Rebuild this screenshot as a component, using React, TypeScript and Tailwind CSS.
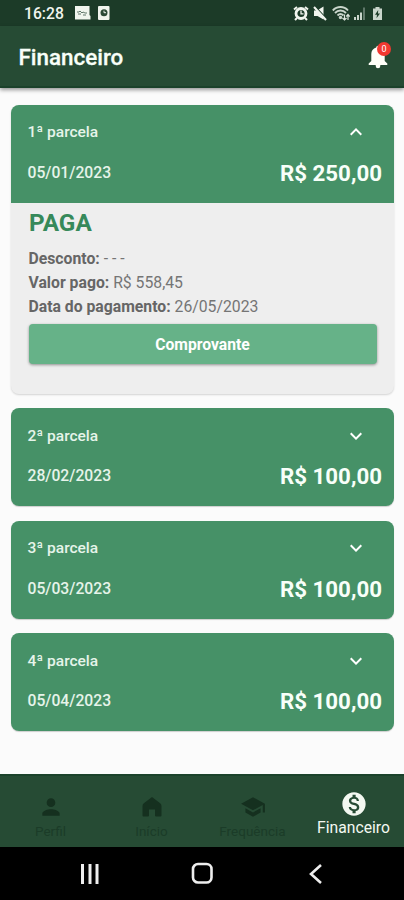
import React from "react";
import { MdPerson, MdSchool, MdMonetizationOn, MdExpandLess, MdExpandMore } from "react-icons/md";

type Parcela = { title: string; date: string; value: string };

const parcelas: Parcela[] = [
  { title: "2ª parcela", date: "28/02/2023", value: "R$ 100,00" },
  { title: "3ª parcela", date: "05/03/2023", value: "R$ 100,00" },
  { title: "4ª parcela", date: "05/04/2023", value: "R$ 100,00" },
];

function CardHeader({ item, open = false }: { item: Parcela; open?: boolean }) {
  const Chevron = open ? MdExpandLess : MdExpandMore;
  return (
    <div
      className={
        "flex h-[98px] flex-col bg-[#469167] pl-[17px] pr-[12px] text-[#e6f4ea] " +
        (open ? "rounded-t-[8px] pt-[15px]" : "rounded-[8px] pt-[15.5px] shadow-[0_1px_1px_rgba(0,0,0,0.18)]")
      }
    >
      <div className="flex h-6 items-center justify-between pr-[14px]">
        <span className="text-[15.5px] font-medium leading-6">{item.title}</span>
        <Chevron className="size-6 text-white" />
      </div>
      <div className="mt-[12.5px] flex h-8 items-center justify-between">
        <span className="text-[15.7px] font-medium leading-8">{item.date}</span>
        <span className="text-[22.3px] font-bold leading-8 text-[#f8fff9]">{item.value}</span>
      </div>
    </div>
  );
}

function StatusBar() {
  return (
    <div className="flex h-[26px] shrink-0 items-center bg-[#1c3b28] pl-6 pr-[21px] text-[#f1f5ee]">
      <span className="w-[50px] pt-[2px] text-[15.7px] font-medium leading-[26px]">16:28</span>
      <svg className="h-[14px] w-[17px]" viewBox="0 0 17 14">
        <path d="M1 0h14.500v9l1 1v3.500H1z" fill="currentColor" />
        <path d="M3 6h2l1-1 2 2 1-1 2 1h2M4 8h3m2 1h3" fill="none" stroke="#61776a" strokeWidth="1" />
      </svg>
      <svg className="ml-[7px] h-[14px] w-[12px]" viewBox="0 0 12 14">
        <rect width="11.5" height="14" rx="1" fill="currentColor" />
        <circle cx="6" cy="6.7" r="3.5" fill="#2b4935" />
        <path d="M6 4.7v2h2" fill="none" stroke="#edf3ed" />
      </svg>
      <div className="ml-auto flex items-center">
        <svg className="h-[15px] w-[16px]" viewBox="0 0 16 15">
          <circle cx="8" cy="7.5" r="5" fill="none" stroke="currentColor" strokeWidth="2.8" />
          <path d="M1 3.5 4 1m8 0 3 2.5M4 12l-2 2m10-2 2 2" stroke="currentColor" strokeWidth="2" />
          <path d="M8 4.5v3.3h2.5" fill="none" stroke="currentColor" strokeWidth="1.3" />
        </svg>
        <svg className="ml-[4px] h-[15px] w-[14px]" viewBox="0 0 14 15">
          <path d="M1 4.500h3L10.500.500v13L4.500 10H1z" fill="currentColor" />
          <path d="m1.800 0 12 13" stroke="#1c3b28" strokeWidth="1.300" />
          <path d="m1 1 12 13" stroke="currentColor" strokeWidth="2" />
        </svg>
        <svg className="ml-[5px] h-[15px] w-[18px]" viewBox="0 0 18 15">
          <path d="M.8 4.500C5-.1 12-.1 16 4.500M3 7c3-3.300 8-3.300 11 0M5.500 9.500q3-3 6 0" fill="none" stroke="#c9d5cb" strokeWidth="1.9" />
          <circle cx="8.500" cy="11.500" r="1.700" fill="#c9d5cb" />
          <path d="M12.500 8.500V14m-2-2 2 2 2-2M16 14V8.500m-1.700 2L16 8.500l1.700 2" fill="none" stroke="#dce5dc" strokeWidth="1.200" />
        </svg>
        <svg className="ml-[3px] h-[15px] w-[14px]" viewBox="0 0 14 15">
          <path d="M1 11h2v3H1zM4 9h2v5H4zM7 6.500h2V14H7z" fill="#c9d5cb" />
          <path d="M10 1.500h2V14h-2z" fill="#60786a" />
        </svg>
        <svg className="ml-[5px] h-[15px] w-[11px]" viewBox="0 0 11 15">
          <path d="M3.500 1h4v1.500H10V14H1V2.500h2.500z" fill="#c9d5cb" />
          <path d="M6.200 4 3 8.800h2l-.5 3.400L8 7.500H6z" fill="#1c3b28" />
        </svg>
      </div>
    </div>
  );
}

function BellIcon() {
  return (
    <svg className="absolute left-0 top-[3px] h-[24px] w-[20px]" viewBox="0 0 20 24" fill="#fffff8">
      <path d="M8.200 2.500a1.800 1.800 0 0 1 3.600 0C15 3.300 16.700 6 16.700 9v7l2.600 2.500V20H.7v-1.500L3.300 16V9c0-3 1.700-5.700 4.900-6.500zM7.700 20h4.600v1a2.300 2.300 0 0 1-4.600 0z" />
    </svg>
  );
}

function HomeIcon() {
  return (
    <svg className="size-6" viewBox="0 0 24 24" fill="currentColor">
      <path d="M12 2 3.800 8.200Q2.500 9.200 2.500 11v9.500q0 1 1 1H8q1 0 1-1V14.500h6v6q0 1 1 1h4.500q1 0 1-1V11q0-1.800-1.300-2.800z" />
    </svg>
  );
}

const tabs = [
  { label: "Perfil", icon: <MdPerson className="size-[26px]" /> },
  { label: "Início", icon: <HomeIcon /> },
  { label: "Frequência", icon: <MdSchool className="size-[26px]" /> },
];

export default function App() {
  return (
    <div className="flex h-[900px] w-[404px] flex-col overflow-hidden bg-[#fbfbfb] font-['Roboto',sans-serif]">
      <StatusBar />
      <header className="z-10 flex h-[62px] shrink-0 items-center justify-between border-b-2 border-[#1b422b] bg-[#264b34] pl-[18.5px] pr-[13px] text-white shadow-[0_2px_4px_rgba(0,0,0,0.4)]">
        <h1 className="pt-[2px] text-[22.4px] font-medium leading-8 text-[#f8fff8] [-webkit-text-stroke:0.3px_#f8fff8]">Financeiro</h1>
        <div className="relative h-7 w-[23px]">
          <BellIcon />
          <span className="absolute right-0 top-0 flex size-[14px] items-center justify-center rounded-full bg-[#f23830] text-[9px] leading-none text-white">0</span>
        </div>
      </header>

      <main className="flex min-h-0 flex-1 flex-col gap-[14.5px] pl-[10.5px] pr-[10px] pt-[17px]">
        <section className="flex h-[288.500px] shrink-0 flex-col rounded-[8px] bg-[#eeeeee] shadow-[0_1px_2px_rgba(0,0,0,0.16)]">
          <CardHeader item={{ title: "1ª parcela", date: "05/01/2023", value: "R$ 250,00" }} open />
          <div className="flex flex-col pl-[18px] pr-[17.5px] pt-1 text-[#757575]">
            <h2 className="pl-[0.5px] text-[24.3px] font-bold leading-8 text-[#36895a]">PAGA</h2>
            <div className="mt-2 text-[15.75px] leading-[23.800px]">
              <p><b className="text-[#666666]">Desconto:</b> - - -</p>
              <p><b className="text-[#666666]">Valor pago:</b> R$ 558,45</p>
              <p><b className="text-[#666666]">Data do pagamento:</b> 26/05/2023</p>
            </div>
            <button className="mt-[6px] h-10 rounded-[4px] bg-[#66b288] text-[15.7px] font-bold text-white shadow-[0_1px_3px_rgba(0,0,0,0.4)]">
              Comprovante
            </button>
          </div>
        </section>
        {parcelas.map((item) => (
          <section key={item.title} className="h-[98px] shrink-0">
            <CardHeader item={item} />
          </section>
        ))}
      </main>

      <nav className="grid h-[73px] shrink-0 grid-cols-4 border-t-2 border-[#1b422b] bg-[#264b34]">
        {tabs.map((tab) => (
          <div key={tab.label} className="flex flex-col items-center pt-[18px] text-[#15301f]">
            <div className="flex h-[26px] items-center">{tab.icon}</div>
            <span className="pt-px text-[13.500px] leading-5 text-[#1b3c28]">{tab.label}</span>
          </div>
        ))}
        <div className="flex flex-col items-center pt-[14px] text-[#f3f8f1]">
          <MdMonetizationOn className="size-7" />
          <span className="pt-px text-[15.7px] leading-[18px]">Financeiro</span>
        </div>
      </nav>

      <footer className="flex h-[53px] shrink-0 items-center bg-black pl-[80px] text-[#eeeeee]">
        <svg className="h-5 w-5" viewBox="0 0 20 20">
          <path d="M2.500 0v20M10 0v20M17 0v20" stroke="currentColor" strokeWidth="3" />
        </svg>
        <svg className="ml-[91px] size-[23px]" viewBox="0 0 23 23">
          <rect x="2" y="2" width="18.500" height="18.500" rx="5" fill="none" stroke="currentColor" strokeWidth="2.600" />
        </svg>
        <svg className="ml-[95px] h-5 w-[14px]" viewBox="0 0 14 20">
          <path d="M12 1 2 10l10 9" fill="none" stroke="currentColor" strokeWidth="2.600" />
        </svg>
      </footer>
    </div>
  );
}
